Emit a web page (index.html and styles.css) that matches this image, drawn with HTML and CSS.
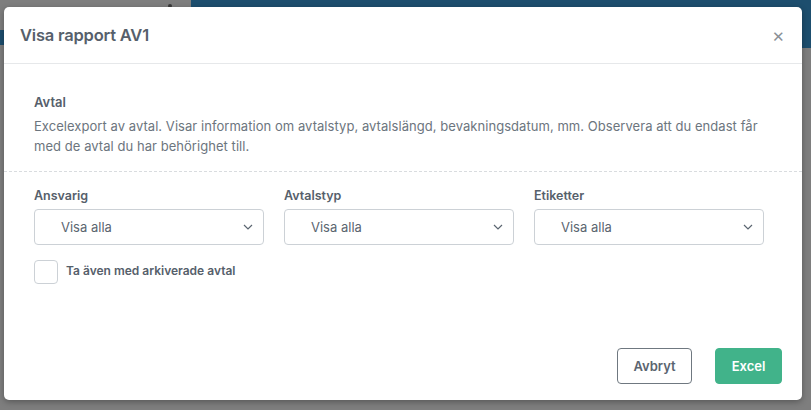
FILE: index.html
```html
<!DOCTYPE html>
<html lang="sv">
<head>
<meta charset="utf-8">
<title>Visa rapport AV1</title>
<link rel="stylesheet" href="styles.css">
</head>
<body>
<div class="page">
  <div class="topbar">
    <div class="topbar-left"><span class="dot"></span></div>
    <div class="topbar-right"></div>
  </div>
  <div class="side-mark"></div>
</div>

<div class="modal">
  <div class="modal-header">
    <h1 class="modal-title">Visa rapport AV1</h1>
    <span class="close">&#x2715;</span>
  </div>
  <div class="modal-body">
    <div class="intro">
      <div class="intro-title">Avtal</div>
      <p class="intro-text">Excelexport av avtal. Visar information om avtalstyp, avtalslängd, bevakningsdatum, mm. Observera att du endast får med de avtal du har behörighet till.</p>
    </div>
    <div class="filters">
      <div class="filter-row">
        <div class="field">
          <div class="field-label">Ansvarig</div>
          <div class="select"><span>Visa alla</span><svg class="chev" width="10" height="6" viewBox="0 0 10 6"><path d="M1 1l4 4 4-4" fill="none" stroke="#5b6570" stroke-width="1.2"/></svg></div>
        </div>
        <div class="field">
          <div class="field-label">Avtalstyp</div>
          <div class="select"><span>Visa alla</span><svg class="chev" width="10" height="6" viewBox="0 0 10 6"><path d="M1 1l4 4 4-4" fill="none" stroke="#5b6570" stroke-width="1.2"/></svg></div>
        </div>
        <div class="field">
          <div class="field-label">Etiketter</div>
          <div class="select"><span>Visa alla</span><svg class="chev" width="10" height="6" viewBox="0 0 10 6"><path d="M1 1l4 4 4-4" fill="none" stroke="#5b6570" stroke-width="1.2"/></svg></div>
        </div>
      </div>
      <div class="check-row">
        <div class="checkbox"></div>
        <div class="check-label">Ta även med arkiverade avtal</div>
      </div>
    </div>
  </div>
  <div class="modal-footer">
    <button class="btn btn-outline">Avbryt</button>
    <button class="btn btn-primary">Excel</button>
  </div>
</div>
</body>
</html>
```

FILE: styles.css
```css
html, body {
  margin: 0;
  padding: 0;
  height: 100%;
}
body {
  background: #7e7e7e;
  font-family: Inter, "Liberation Sans", sans-serif;
  overflow: hidden;
}
.page {
  height: 100%;
}
.topbar {
  display: flex;
  height: 48px;
}
.topbar-left {
  width: 191px;
  position: relative;
}
.dot {
  position: absolute;
  left: 168px;
  top: 4px;
  width: 4px;
  height: 4px;
  border-radius: 2px;
  background: #3a3a3a;
}
.topbar-right {
  flex: 1;
  background: #1d4e6e;
}
.side-mark {
  position: absolute;
  left: 0;
  top: 30px;
  width: 6px;
  height: 15px;
  background: #1d4e6e;
}
.modal {
  position: absolute;
  left: 4px;
  top: 7px;
  width: 798px;
  height: 393px;
  background: #fff;
  border-radius: 5px;
  box-shadow: 0 2px 6px rgba(0,0,0,0.3);
  display: flex;
  flex-direction: column;
  color: #5b6570;
}
.modal-header {
  height: 56px;
  border-bottom: 1px solid #e6e8ea;
  display: flex;
  align-items: center;
  justify-content: space-between;
  padding: 0 17px 0 16px;
}
.modal-title {
  margin: 0;
  font-size: 16.5px;
  font-weight: 600;
  color: #56606b;
  letter-spacing: -0.2px;
}
.close {
  font-size: 15px;
  font-weight: 300;
  color: #8a9097;
  margin-top: 2px;
}
.modal-body {
  flex: 1;
}
.intro {
  padding: 28px 30px 15px;
  border-bottom: 1px dashed #d9dcdf;
}
.intro-title {
  font-size: 13px;
  font-weight: 600;
  line-height: 20px;
  color: #56606b;
}
.intro-text {
  margin: 4px 0 0;
  font-size: 13px;
  line-height: 20px;
  color: #6c757e;
  letter-spacing: 0.05px;
}
.filters {
  padding: 15px 30px 0;
}
.filter-row {
  display: flex;
  gap: 20px;
}
.field {
  width: 230px;
  display: flex;
  flex-direction: column;
}
.field-label {
  font-size: 12.5px;
  font-weight: 600;
  line-height: 18px;
  margin-bottom: 4px;
  color: #56606b;
}
.select {
  height: 36px;
  box-sizing: border-box;
  border: 1px solid #ccd1d6;
  border-radius: 4px;
  display: flex;
  align-items: center;
  justify-content: space-between;
  padding: 0 10px 0 26px;
  font-size: 13px;
  color: #5b6570;
}
.chev {
  display: block;
}
.check-row {
  display: grid;
  grid-template-columns: 24px auto;
  column-gap: 8px;
  justify-content: start;
  align-items: center;
  margin-top: 15px;
}
.checkbox {
  width: 24px;
  height: 24px;
  box-sizing: border-box;
  border: 1px solid #ccd1d6;
  border-radius: 4px;
}
.check-label {
  font-size: 12px;
  font-weight: 600;
  color: #56606b;
  margin-top: -3px;
}
.modal-footer {
  display: flex;
  justify-content: flex-end;
  gap: 23px;
  padding: 0 20px 16px;
}
.btn {
  height: 36px;
  box-sizing: border-box;
  border-radius: 4px;
  font-family: inherit;
  font-size: 13px;
  font-weight: 600;
  padding: 0;
  cursor: pointer;
}
.btn-outline {
  width: 75px;
  background: #fff;
  border: 1px solid #6f7880;
  color: #5b6570;
}
.btn-primary {
  width: 67px;
  background: #41b38a;
  border: 1px solid #41b38a;
  color: #fff;
}
```
